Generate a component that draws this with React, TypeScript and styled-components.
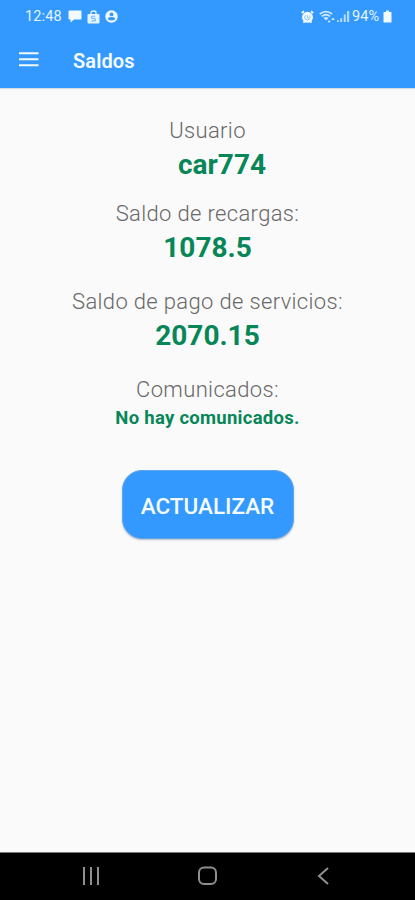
import React from "react";
import styled, { createGlobalStyle } from "styled-components";

const Global = createGlobalStyle`
  * { box-sizing: border-box; }
  body { margin: 0; background: #fafafa; font-family: Roboto, "Noto Sans", sans-serif; }
`;

const Screen = styled.div`
  display: flex;
  flex-direction: column;
  width: 100%;
  height: 900px;
  overflow: hidden;
  background: #fafafa;
`;

const Header = styled.header`
  flex: none;
  height: 88px;
  background: #3399ff;
  color: #f5fbff;
  box-shadow: 0 1px 1px #d5dde6;
`;

const StatusBar = styled.div`
  display: flex;
  justify-content: space-between;
  align-items: center;
  height: 33px;
  padding: 0 23px 0 25px;
  font-size: 14.5px;
  color: #e4f4ff;
`;

const StatusGroup = styled.div`
  display: flex;
  align-items: center;
`;

const StatusText = styled.span<{ $width: number }>`
  width: ${(p) => p.$width}px;
  white-space: nowrap;
  letter-spacing: 0.15px;
`;

const Glyph = styled.svg<{ $gap?: number }>`
  display: block;
  flex: none;
  margin-left: ${(p) => p.$gap ?? 0}px;
`;

const TitleBar = styled.div`
  display: flex;
  align-items: center;
  height: 55px;
  padding-left: 19px;
`;

const MenuButton = styled.button`
  display: block;
  width: 54px;
  height: 30px;
  padding: 0;
  border: 0;
  background: none;
  color: inherit;
`;

const Title = styled.h1`
  margin: 0;
  font-size: 20px;
  line-height: 30px;
  font-weight: 600;
  letter-spacing: 0.1px;
`;

const Content = styled.main`
  flex: 1;
  display: flex;
  flex-direction: column;
  align-items: center;
  padding-top: 29px;
`;

const Field = styled.section<{ $after: number }>`
  display: flex;
  flex-direction: column;
  align-items: center;
  margin-bottom: ${(p) => p.$after}px;
`;

const Label = styled.span`
  font-size: 22px;
  line-height: 28px;
  font-weight: 350;
  letter-spacing: 0.35px;
  color: #686868;
`;

const Value = styled.strong<{ $indent?: number }>`
  padding-left: ${(p) => p.$indent ?? 0}px;
  font-size: 28px;
  line-height: 40px;
  font-weight: 700;
  color: #078658;
`;

const Notice = styled.strong`
  font-size: 18.5px;
  line-height: 28px;
  font-weight: 700;
  letter-spacing: 0.27px;
  color: #078658;
`;

const UpdateButton = styled.button`
  width: 172px;
  height: 69px;
  padding: 2px 0 0;
  border: 1px solid #5ea5ea;
  border-radius: 20px;
  background: #3399ff;
  box-shadow: 0 1px 2px rgba(60, 80, 110, 0.35);
  color: #f5fbff;
  font-family: inherit;
  font-size: 22.5px;
  font-weight: 500;
`;

const NavBar = styled.nav`
  flex: none;
  display: flex;
  justify-content: space-between;
  align-items: center;
  height: 48px;
  padding: 0 85px 2px 82px;
  border-top: 1px solid #777;
  background: #000;
  color: #8f8f8f;
`;

export default function App() {
  return (
    <Screen>
      <Global />
      <Header>
        <StatusBar>
          <StatusGroup>
            <StatusText $width={43}>12:48</StatusText>
            <Glyph width="14" height="13" viewBox="0 0 14 13" fill="#f2faff">
              <path d="M1.5 0.5h11q1 0 1 1v7q0 1-1 1H6l-3.4 3V9.500H1.500q-1 0-1-1v-7q0-1 1-1z" />
            </Glyph>
            <Glyph $gap={5} width="13" height="14" viewBox="0 0 13 14" fill="none">
              <path d="M4 4V2.500q0-1.500 2.500-1.500T9 2.500V4" stroke="#e4f4ff" strokeWidth="1.300" />
              <rect x="0.500" y="4" width="12" height="9.500" rx="1" fill="#e4f4ff" />
              <path d="M8.300 6.200H5.500q-1 0-1 1.100t1 1.200h2q1 0 1 1.200t-1 1.200h-3" stroke="#6fb6fb" strokeWidth="1.100" />
            </Glyph>
            <Glyph $gap={5} width="13" height="13" viewBox="0 0 13 13">
              <circle cx="6.500" cy="6.500" r="6.200" fill="#edf8ff" />
              <circle cx="6.500" cy="4.400" r="1.900" fill="#3c97f3" />
              <path d="M2.700 8.900q0-2 3.800-2t3.800 2q-1.500 1.600-3.800 1.600T2.700 8.900z" fill="#3c97f3" />
            </Glyph>
          </StatusGroup>
          <StatusGroup>
            <Glyph width="13" height="14" viewBox="0 0 13 14" fill="none">
              <path d="M0.800 3L3 1.200M12.200 3L10 1.200M2.500 12.800l1.300-1.600M10.500 12.800l-1.300-1.600" stroke="#f2faff" strokeWidth="1.800" />
              <circle cx="6.500" cy="7.300" r="5.500" fill="#f2faff" />
              <path d="M4.400 5.400a2.700 2.700 0 1 0 4.200.2M6.500 5.300v2.300L7.900 8.200" stroke="#58a9f8" strokeWidth="0.700" />
            </Glyph>
            <Glyph $gap={5} width="17" height="14" viewBox="0 0 17 14" fill="none">
              <path d="M0.800 4q6-4.800 12.400 0M2.800 6.400q4.200-3.400 8.400 0M5 8.600q2-1.500 4 0" stroke="#c8e7ff" strokeWidth="1.800" />
              <path d="M5.500 8.500h3L7 10.500zM8.500 10.700h3.200L10.100 13zM12.300 10l1.700-2.500 1.700 2.500z" fill="#dcf1ff" />
            </Glyph>
            <Glyph width="14" height="13" viewBox="0 0 14 13" fill="#b5dcff">
              <path d="M1 10.200h2V12H1zM4.200 8.200h2V12h-2zM7.800 4.500h2V12h-2zM11 1h2.200v11H11z" />
            </Glyph>
            <Glyph width="2" height="1" />
            <StatusText $width={30}>94%</StatusText>
            <Glyph $gap={1} width="9" height="13" viewBox="0 0 9 13" fill="#f2faff">
              <path d="M3 0.500h3V2h2q.500 0 .500.500V12q0 .500-.500.500H1q-.500 0-.500-.500V2.500Q.500 2 1 2h2z" />
            </Glyph>
          </StatusGroup>
        </StatusBar>
        <TitleBar>
          <MenuButton aria-label="Menú">
            <Glyph width="20" height="30" viewBox="0 0 20 30" stroke="#f2faff" strokeWidth="2">
              <path d="M0 7.200h19.500M0 13.200h19.500M0 19.200h19.500" />
            </Glyph>
          </MenuButton>
          <Title>Saldos</Title>
        </TitleBar>
      </Header>
      <Content>
        <Field $after={15}>
          <Label>Usuario</Label>
          <Value $indent={29}>car774</Value>
        </Field>
        <Field $after={20}>
          <Label>Saldo de recargas:</Label>
          <Value>1078.5</Value>
        </Field>
        <Field $after={20}>
          <Label>Saldo de pago de servicios:</Label>
          <Value>2070.15</Value>
        </Field>
        <Field $after={38}>
          <Label>Comunicados:</Label>
          <Notice>No hay comunicados.</Notice>
        </Field>
        <UpdateButton>ACTUALIZAR</UpdateButton>
      </Content>
      <NavBar>
        <Glyph width="18" height="18" viewBox="0 0 18 18" stroke="currentColor" strokeWidth="2">
          <path d="M2 0v18M9 0v18M16 0v18" />
        </Glyph>
        <Glyph width="20" height="20" viewBox="0 0 20 20" fill="none" stroke="currentColor" strokeWidth="2">
          <rect x="1" y="1.500" width="17" height="16.500" rx="5" />
        </Glyph>
        <Glyph width="14" height="18" viewBox="0 0 14 18" fill="none" stroke="currentColor" strokeWidth="2">
          <path d="M12 1L3 9l9 8" />
        </Glyph>
      </NavBar>
    </Screen>
  );
}
